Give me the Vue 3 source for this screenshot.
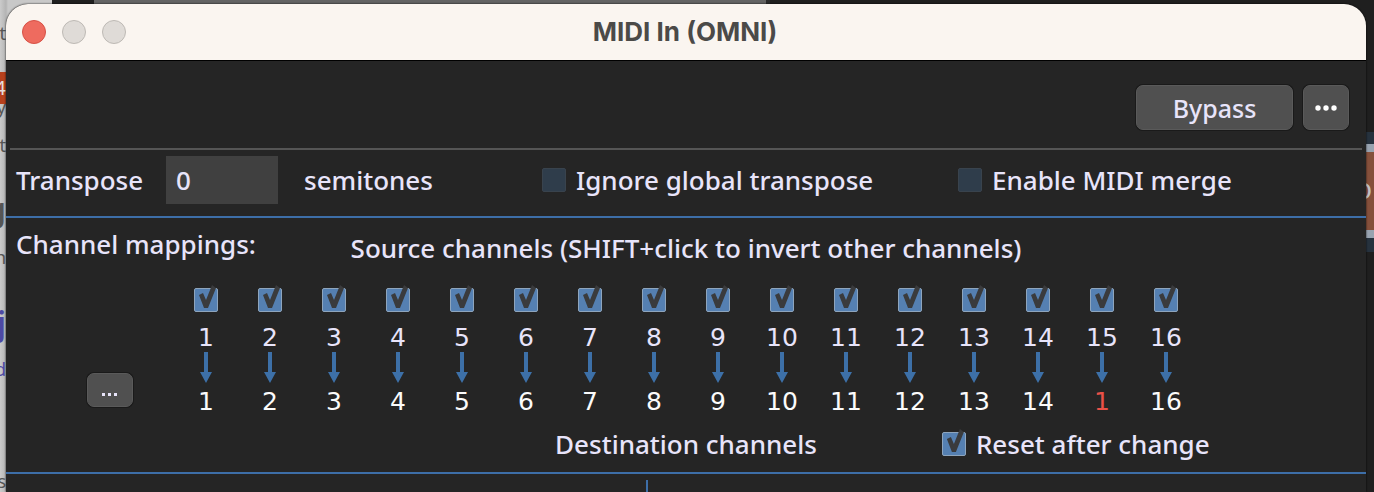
<template>
  <div class="desktop">
    <div class="backdrop" aria-hidden="true">
      <div class="back-top"></div>
      <div class="back-left">
        <span v-for="g in leftGlyphs" :key="g.top" class="glyph" :class="g.kind" :style="{ top: g.top + 'px' }">{{ g.text }}</span>
      </div>
      <div class="back-right">
        <div class="back-tab"><span>O</span></div>
      </div>
    </div>

    <main class="window">
      <header class="titlebar">
        <div class="lights">
          <button type="button" class="light close" aria-label="Close"></button>
          <button type="button" class="light" aria-label="Minimize"></button>
          <button type="button" class="light" aria-label="Zoom"></button>
        </div>
        <h1 class="title">MIDI In (OMNI)</h1>
      </header>

      <div class="toolbar">
        <button type="button" class="btn btn-bypass">Bypass</button>
        <button type="button" class="btn btn-more" aria-label="More options">
          <svg width="22" height="6" viewBox="0 0 22 6">
            <circle cx="3" cy="3" r="2.7" />
            <circle cx="11" cy="3" r="2.7" />
            <circle cx="19" cy="3" r="2.7" />
          </svg>
        </button>
      </div>

      <section class="transpose">
        <div class="transpose-field">
          <label for="transpose" class="transpose-label">Transpose</label>
          <input id="transpose" v-model="transpose" type="text" class="number" />
          <span>semitones</span>
        </div>
        <label class="option"><input v-model="ignoreGlobal" type="checkbox" class="check" />Ignore global transpose</label>
        <label class="option"><input v-model="midiMerge" type="checkbox" class="check" />Enable MIDI merge</label>
      </section>

      <section class="mappings">
        <div class="mappings-head">
          <h2 class="mappings-title">Channel mappings:</h2>
          <p class="source-title">Source channels (SHIFT+click to invert other channels)</p>
        </div>

        <div class="mappings-body">
          <div class="side">
            <button type="button" class="btn btn-map" aria-label="Mapping presets">
              <svg width="16" height="3" viewBox="0 0 16 3">
                <rect x="0" width="3" height="3" />
                <rect x="6" width="3" height="3" />
                <rect x="12" width="3" height="3" />
              </svg>
            </button>
          </div>
          <div class="channels">
            <div v-for="ch in channels" :key="ch.source" class="channel">
              <input :id="'ch' + ch.source" type="checkbox" class="check" :checked="ch.on" @click="toggle(ch, $event)" />
              <label :for="'ch' + ch.source" class="source">{{ ch.source }}</label>
              <svg class="arrow" width="12" height="32" viewBox="0 0 12 32">
                <path d="M4 0h4v20h4L6 31 0 20h4z" />
              </svg>
              <button type="button" class="dest" :class="{ changed: ch.dest !== ch.source }" @click="nextDest(ch)">{{ ch.dest }}</button>
            </div>
          </div>
        </div>

        <div class="mappings-foot">
          <p class="dest-title">Destination channels</p>
          <label class="option reset"><input v-model="resetAfter" type="checkbox" class="check" />Reset after change</label>
        </div>
      </section>

      <div class="lower">
        <div class="divider"></div>
      </div>
    </main>
  </div>
</template>

<script setup>
import { ref } from 'vue'

const transpose = ref('0')
const ignoreGlobal = ref(false)
const midiMerge = ref(false)
const resetAfter = ref(true)

const channels = ref(
  Array.from({ length: 16 }, (_, i) => ({ source: i + 1, dest: i === 14 ? 1 : i + 1, on: true }))
)

// slivers of the document that stick out left of the window
const leftGlyphs = [
  { text: 't', top: 20, kind: 'small' },
  { text: '4', top: 72, kind: 'badge' },
  { text: 'y', top: 94, kind: 'small' },
  { text: 't', top: 132, kind: 'small' },
  { text: 'g', top: 192, kind: 'large' },
  { text: 'n', top: 244, kind: 'small' },
  { text: 'j', top: 306, kind: 'large link' },
  { text: 'd', top: 356, kind: 'small link' },
  { text: 's', top: 468, kind: 'small' },
]

function toggle(ch, event) {
  if (event.shiftKey) {
    channels.value.forEach(c => { if (c !== ch) c.on = !c.on })
    event.preventDefault()
  } else {
    ch.on = event.target.checked
  }
}

function nextDest(ch) {
  ch.dest = (ch.dest % 16) + 1
  if (resetAfter.value) transpose.value = '0'
}
</script>

<style>
body { background: #1d1d1d; }
</style>

<style scoped>
* { box-sizing: border-box; }
h1, h2, p { margin: 0; font-weight: inherit; }
.desktop {
  position: relative;
  height: 100vh;
  overflow: hidden;
  padding: 4px 8px 0 6px;
  font-family: "Noto Sans", "Open Sans", sans-serif;
  font-size: 26px;
  font-weight: 500;
  line-height: 32px;
  color: #e8e4fa;
}

/* what shows around the window */
.backdrop { position: absolute; inset: 0; background: #1f1f1f; }
.back-top { position: absolute; top: 0; left: 94px; width: 676px; height: 8px; background: #646464; border-right: 4px solid #2a2a2a; }
.back-left { position: absolute; top: 0; bottom: 0; left: 0; width: 52px; background: linear-gradient(90deg, #cbcbcb, #b4b4b4 6px, #c8c8c8 8px); }
.glyph { position: absolute; right: 46px; color: #555; line-height: 26px; }
.small { font-size: 18px; font-weight: 400; }
.large { font-size: 32px; line-height: 34px; font-weight: 600; }
.link { color: #4d49a5; }
.badge { width: 12px; background: #b6401c; color: #e6dcd8; font-size: 20px; line-height: 32px; font-weight: 400; text-align: right; }
.back-right { position: absolute; top: 132px; right: 0; width: 8px; height: 120px; padding: 12px 0 14px; background: #26323e; overflow: hidden; }
.back-tab { height: 94px; border: solid #98a3b0; border-width: 8px 0; background: #85503b; color: #c0bfc4; overflow: hidden; }
.back-tab span { position: absolute; right: 2px; top: 42px; font-size: 22px; }

.window {
  position: relative;
  height: 100%;
  display: flex;
  flex-direction: column;
  border-radius: 22px 22px 0 0;
  overflow: hidden;
  background: #252525;
  box-shadow: 0 0 2px #000;
}
.titlebar {
  flex: none;
  display: grid;
  grid-template-columns: 1fr auto 1fr;
  align-items: center;
  height: 57px;
  padding: 0 18px 1px 16px;
  background: #faf5f0;
  border-bottom: 1px solid #000;
}
.lights { display: flex; gap: 16px; }
.light { width: 24px; height: 24px; padding: 0; border: 1px solid #bdb9b4; border-radius: 50%; background: #dfdbd7; }
.light.close { background: #ee6b5f; border-color: #d65146; }
.title { color: #4b4a48; font: 700 26px/32px Inter, sans-serif; }

.toolbar {
  flex: none;
  display: flex;
  justify-content: flex-end;
  gap: 10px;
  height: 89px;
  margin: 0 4px;
  padding: 24px 13px 0 0;
  border-bottom: 2px solid #555;
}
.btn {
  display: flex;
  align-items: center;
  justify-content: center;
  padding: 0;
  border: 1px solid #5a5a5a;
  border-radius: 7px;
  background: #505050;
  box-shadow: 0 0 0 1px #1a1a1a;
  font: inherit;
  color: inherit;
}
.btn-bypass { width: 157px; height: 45px; font-size: 25px; }
.btn-more { width: 46px; height: 45px; fill: #fff; }
.btn-map { width: 46px; height: 34px; padding-top: 8px; fill: #e8e4fa; }

.transpose {
  flex: none;
  display: grid;
  grid-template-columns: 526fr 416fr 398fr;
  align-items: center;
  height: 68px;
  padding: 0 10px 6px;
  border-bottom: 2px solid #3d6ea8;
  white-space: nowrap;
}
.transpose-field { display: flex; align-items: center; }
.transpose-label { width: 150px; }
.number { width: 112px; height: 48px; margin-right: 26px; padding: 0 10px; border: 0; border-radius: 0; background: #404040; color: inherit; font: inherit; outline: none; }
.option { display: flex; align-items: center; gap: 10px; white-space: nowrap; }

.check {
  position: relative;
  appearance: none;
  flex: none;
  width: 24px;
  height: 24px;
  margin: 0;
  border: 1px solid #39434d;
  border-radius: 2px;
  background: #2f3d4b;
}
.check:checked { border-color: #8ea5bd; background: #5580b2; }
.check:checked::after {
  content: "";
  position: absolute;
  top: -4px;
  left: 4px;
  width: 18px;
  height: 24px;
  background: #3a3b3d;
  clip-path: polygon(0 10px, 4px 8px, 7px 15px, 13px 0, 17px 3px, 9px 23px, 5px 23px);
}

.mappings { flex: none; border-bottom: 2px solid #3d6ea8; height: 256px; }
.mappings-head { display: grid; grid-template-columns: 1fr auto 1fr; padding: 10px 10px 0; white-space: nowrap; }
.mappings-title { width: 0; font-size: 26px; }
.source-title { padding-top: 4px; }
.mappings-body { display: grid; grid-template-columns: 168px 1fr 168px; margin-top: 24px; }
.side { padding: 85px 0 0 81px; }
.channels { display: grid; grid-template-columns: repeat(16, 1fr); }
.channel { display: flex; flex-direction: column; align-items: center; font-family: "DejaVu Sans", sans-serif; font-size: 25px; font-weight: 400; }
.source { height: 30px; margin-top: 10px; }
.arrow { fill: #3d70a8; }
.dest { margin-top: 2px; padding: 0; border: 0; background: none; color: #fbfbfb; font: inherit; }
.changed { color: #ea5148; }
.mappings-foot { display: grid; grid-template-columns: 1fr auto 1fr; align-items: center; margin-top: 10px; }
.dest-title { grid-column: 2; }
.reset { padding-left: 125px; }

.lower { flex: 1; display: flex; padding: 6px 0 0 640px; }
.divider { width: 2px; background: #3d6ea8; }
</style>
